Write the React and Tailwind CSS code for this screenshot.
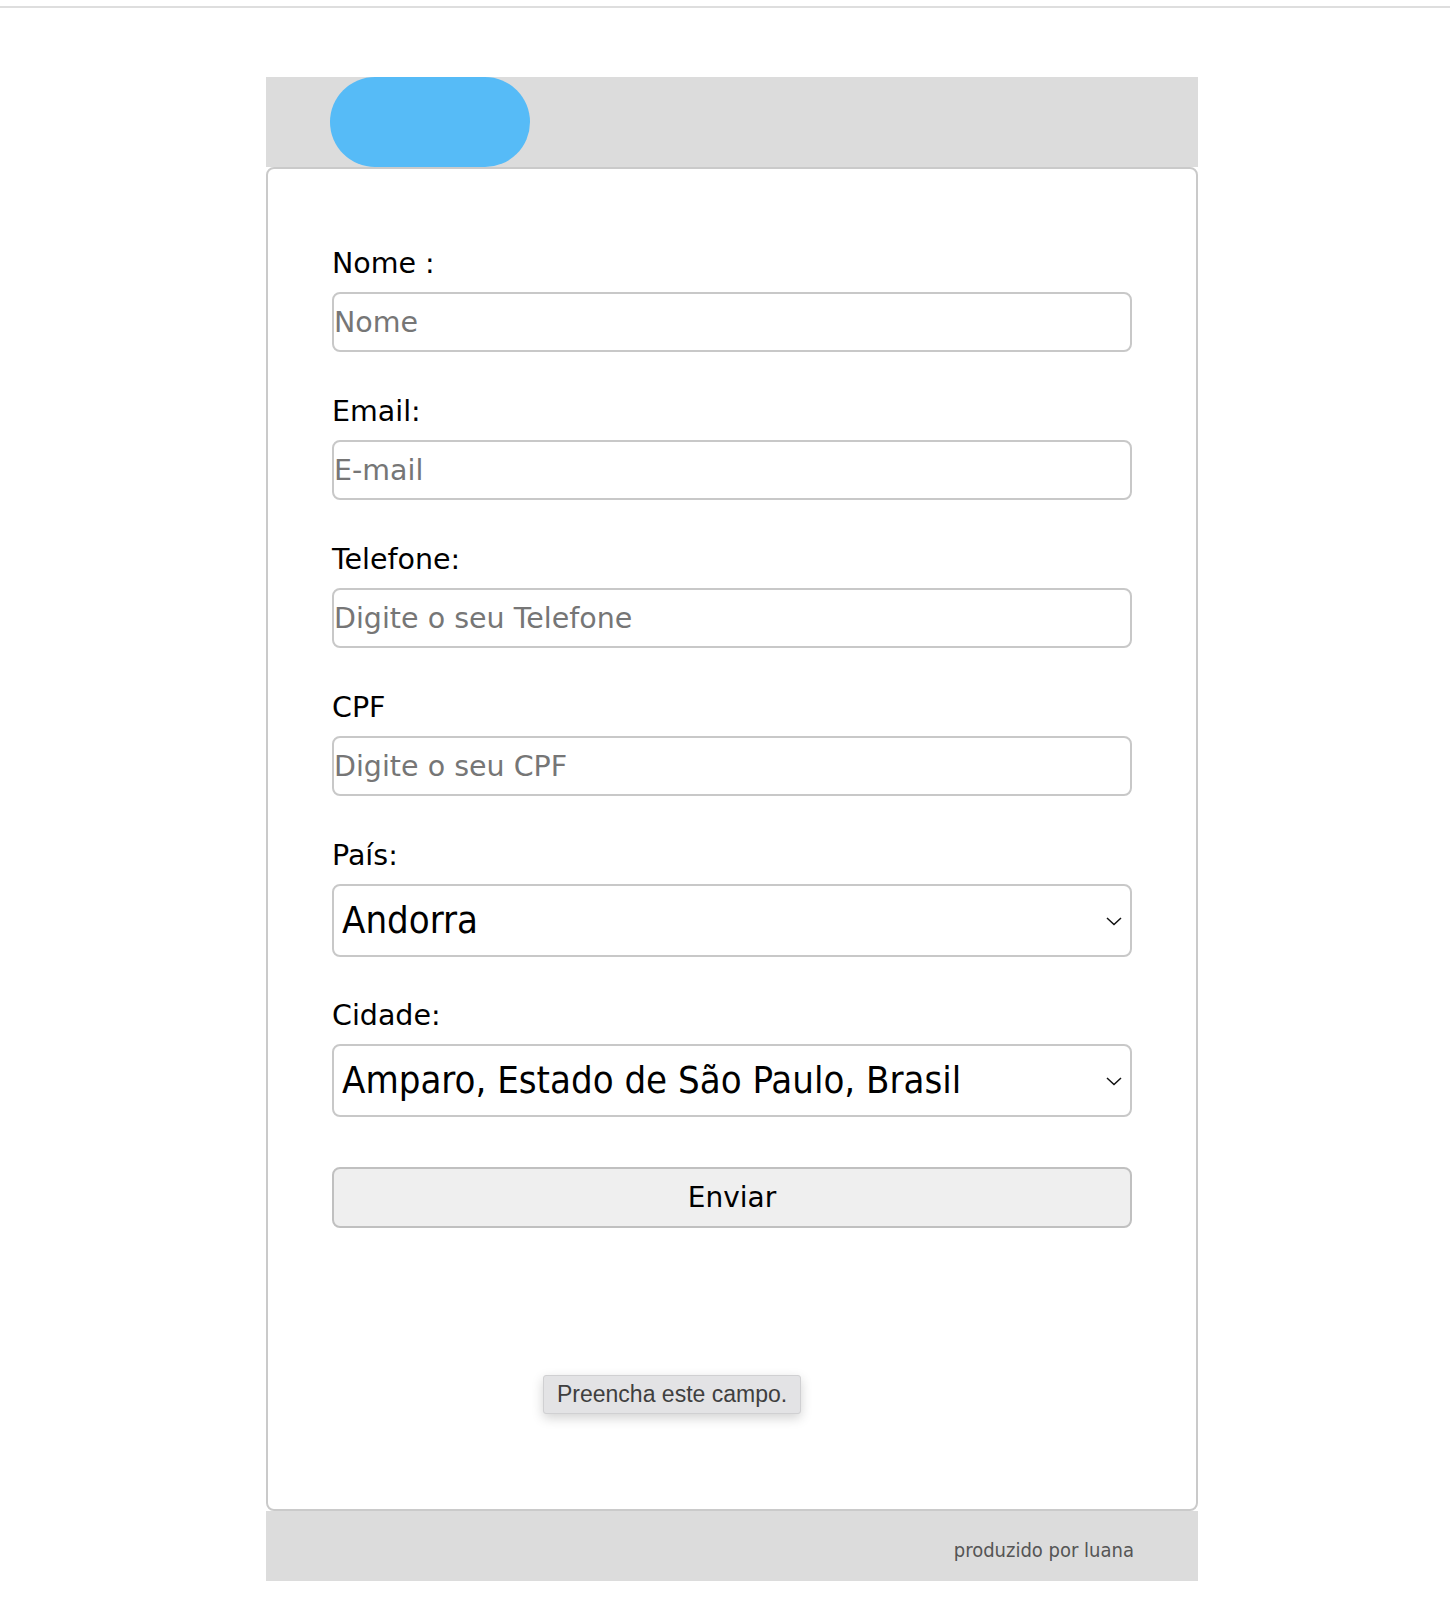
import React from 'react';

const font = { fontFamily: '"DejaVu Sans", sans-serif' };
const condensed = { fontFamily: '"DejaVu Sans Condensed", "DejaVu Sans", sans-serif' };

const Chevron = () => (
  <svg
    className="pointer-events-none absolute right-[9px] top-1/2 -translate-y-1/2"
    width="18"
    height="10"
    viewBox="0 0 18 10"
    fill="none"
  >
    <path d="M2 2l7 6.5 7-6.5" stroke="#111" strokeWidth="1.5" />
  </svg>
);

const Field = ({ label, placeholder, type = 'text' }) => (
  <div className="mb-[43px]">
    <label className="block h-[34px] text-[28.5px] leading-[34px] text-black mb-[11px]">{label}</label>
    <input
      type={type}
      placeholder={placeholder}
      className="block w-full h-[60px] border-2 border-[#c8c8c8] rounded-[8px] px-0 text-[28.5px] text-black placeholder:text-[#767676] outline-none bg-white"
      style={font}
    />
  </div>
);

const SelectField = ({ label, value, options }) => (
  <div>
    <label className="block h-[34px] text-[28.5px] leading-[34px] text-black mb-[11px]">{label}</label>
    <div className="relative">
      <select
        defaultValue={value}
        className="block w-full h-[73px] appearance-none border-2 border-[#c8c8c8] rounded-[8px] pl-[8px] pr-[40px] text-[38px] text-black bg-white outline-none"
        style={condensed}
      >
        {options.map((o) => (
          <option key={o}>{o}</option>
        ))}
      </select>
      <Chevron />
    </div>
  </div>
);

export default function App() {
  return (
    <div className="min-h-[1622px] bg-white" style={font}>
      {/* top rule */}
      <div className="pt-[6px]">
        <div className="h-[2px] bg-[#dedede]" />
      </div>

      <div className="ml-[266px] w-[932px] mt-[69px]">
        {/* header */}
        <header className="h-[90px] bg-[#dcdcdc] pl-[64px]">
          <div className="w-[200px] h-[90px] rounded-full bg-[#56bbf7]" />
        </header>

        {/* form card */}
        <main className="relative border-2 border-[#cacaca] rounded-[8px] bg-white px-[64px] pt-[78px] pb-[281px]">
          <form onSubmit={(e) => e.preventDefault()} className="flex flex-col">
            <Field label="Nome :" placeholder="Nome" />
            <Field label="Email:" placeholder="E-mail" type="email" />
            <Field label="Telefone:" placeholder="Digite o seu Telefone" />
            <Field label="CPF" placeholder="Digite o seu CPF" />
            <div className="mb-[42px]">
              <SelectField label="País:" value="Andorra" options={['Andorra', 'Brasil', 'Portugal']} />
            </div>
            <SelectField
              label="Cidade:"
              value="Amparo, Estado de São Paulo, Brasil"
              options={['Amparo, Estado de São Paulo, Brasil', 'Campinas, Estado de São Paulo, Brasil']}
            />
            <button
              type="submit"
              className="block w-full h-[61px] mt-[50px] border-2 border-[#c0c0c0] rounded-[8px] bg-[#efefef] text-[28px] text-black"
              style={font}
            >
              Enviar
            </button>
          </form>

          {/* validation tooltip */}
          <div
            className="absolute left-[275px] top-[1206px] h-[39px] px-[13px] flex items-center bg-[#e3e3e5] border border-[#d0d0d2] rounded-[3px] shadow-[0_4px_12px_rgba(0,0,0,0.18)] text-[23px] text-[#3f3f3f]"
            style={{ fontFamily: '"Liberation Sans", Arial, sans-serif' }}
          >
            Preencha este campo.
          </div>
        </main>

        {/* footer */}
        <footer className="h-[70px] bg-[#dcdcdc] flex items-center justify-end pr-[64px] pt-[8px]">
          <span className="text-[20px] text-[#555]" style={condensed}>produzido por luana</span>
        </footer>
      </div>
    </div>
  );
}
